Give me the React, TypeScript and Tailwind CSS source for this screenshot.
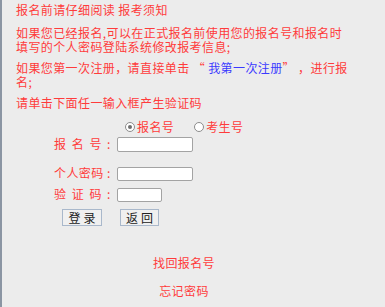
import React, { useState } from "react";

function Radio({ checked }: { checked: boolean }) {
  return (
    <span className="inline-flex h-[10px] w-[10px] items-center justify-center rounded-full border border-[#8c8c8c] bg-white">
      {checked && <span className="h-[4px] w-[4px] rounded-full bg-[#6e6e6e]" />}
    </span>
  );
}

function Label({ chars }: { chars: string[] }) {
  return (
    <span className="flex w-[63px] items-center whitespace-nowrap pb-[1px]">
      <span className="flex w-[48px] justify-between">
        {chars.map((c) => (
          <span key={c}>{c}</span>
        ))}
      </span>
      <span className="ml-[5px]">:</span>
    </span>
  );
}

function App() {
  const [type, setType] = useState("bmh");

  return (
    <div
      className="min-h-screen border-l-2 border-[#8b95a3] bg-[#ececec] text-[12px] leading-[14px] tracking-[0.4px] text-[#ff3b3b]"
      style={{ fontFamily: '"Noto Sans CJK SC", "Noto Sans", sans-serif' }}
    >
      <div className="w-[346px] pl-[14px] pt-[3px]">
        <p>报名前请仔细阅读 报考须知</p>
        <p className="mt-[9px]">
          如果您已经报名,可以在正式报名前使用您的报名号和报名时填写的个人密码登陆系统修改报考信息;
        </p>
        <p className="mt-[7px]">
          如果您第一次注册，请直接单击 “ <span className="text-[#3a3aff]">我第一次注册</span>” ，进行报名;
        </p>
        <p className="mt-[7px]">请单击下面任一输入框产生验证码</p>
      </div>

      {/* login form */}
      <div className="mt-[10px] flex flex-col">
        <div className="flex h-[14px] items-center pl-[123px]">
          <label className="flex items-center gap-[2px]" onClick={() => setType("bmh")}>
            <Radio checked={type === "bmh"} />
            <span>报名号</span>
          </label>
          <label className="ml-[20px] flex items-center gap-[2px]" onClick={() => setType("ksh")}>
            <Radio checked={type === "ksh"} />
            <span>考生号</span>
          </label>
        </div>

        <div className="mt-[3px] flex items-end pl-[52px]">
          <Label chars={["报", "名", "号"]} />
          <input className="h-[15px] w-[76px] rounded-[2px] border border-[#a3a3a3] bg-white" />
        </div>

        <div className="mt-[14px] flex items-end pl-[52px]">
          <Label chars={["个", "人", "密", "码"]} />
          <input
            type="password"
            className="h-[14px] w-[76px] rounded-[2px] border border-[#a3a3a3] bg-white"
          />
        </div>

        <div className="mt-[6px] flex items-end pl-[52px]">
          <Label chars={["验", "证", "码"]} />
          <input className="h-[14px] w-[45px] rounded-[2px] border border-[#a3a3a3] bg-white" />
        </div>

        <div className="mt-[7px] flex gap-[18px] pl-[60px]">
          <button className="h-[17px] w-[40px] border border-[#a9b8cb] bg-[#f0f0f0] pl-[3px] text-[12px] leading-[15px] tracking-[3px] text-[#222]">
            登录
          </button>
          <button className="h-[17px] w-[39px] border border-[#a9b8cb] bg-[#f0f0f0] pl-[3px] text-[12px] leading-[15px] tracking-[3px] text-[#222]">
            返回
          </button>
        </div>

        <div className="mt-[30px] w-[364px] text-center">找回报名号</div>
        <div className="mt-[14px] w-[364px] text-center">忘记密码</div>
      </div>
    </div>
  );
}

export default App;
